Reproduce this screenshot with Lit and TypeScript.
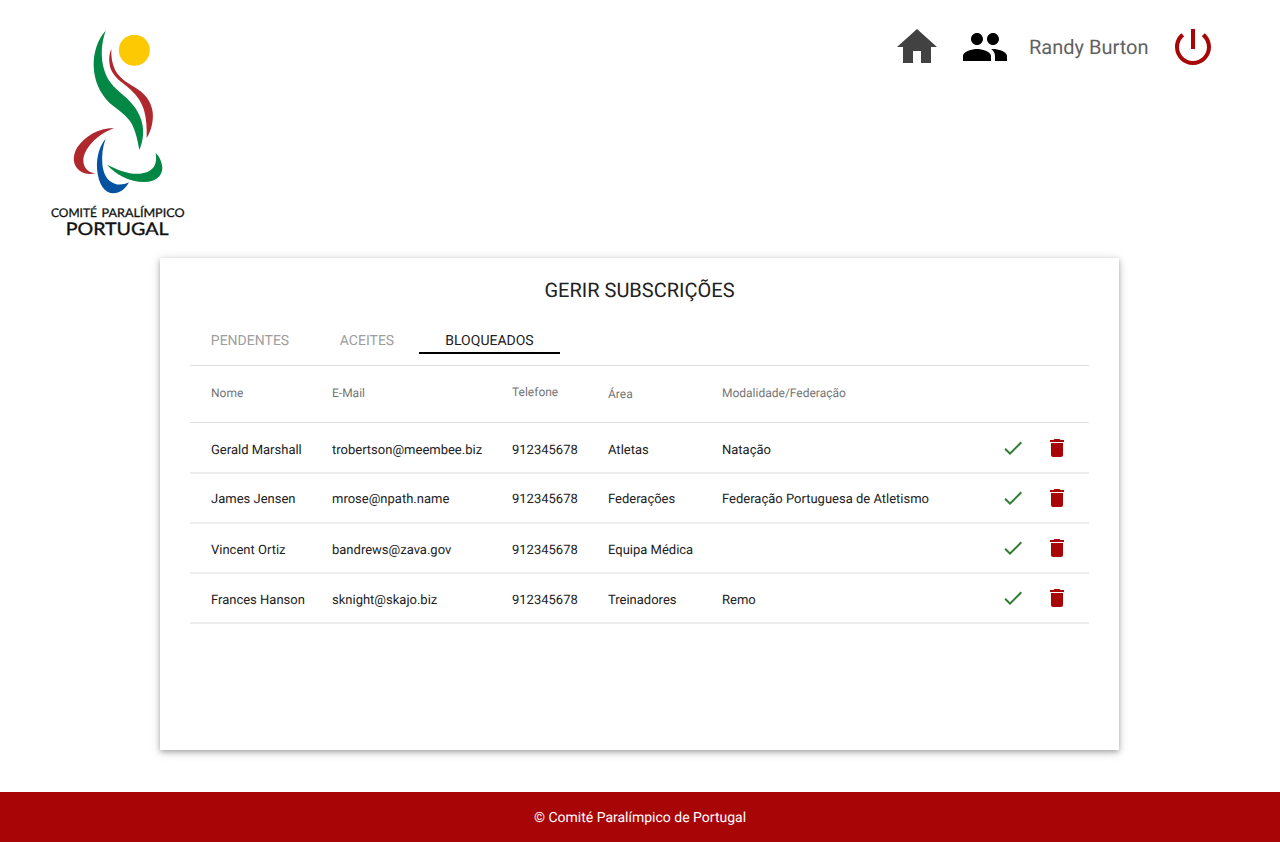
import { LitElement, html, css, svg } from "lit";
import { customElement } from "lit/decorators.js";

interface Row {
  nome: string;
  email: string;
  telefone: string;
  area: string;
  modalidade: string;
}

const rows: Row[] = [
  { nome: "Gerald Marshall", email: "trobertson@meembee.biz", telefone: "912345678", area: "Atletas", modalidade: "Natação" },
  { nome: "James Jensen", email: "mrose@npath.name", telefone: "912345678", area: "Federações", modalidade: "Federação Portuguesa de Atletismo" },
  { nome: "Vincent Ortiz", email: "bandrews@zava.gov", telefone: "912345678", area: "Equipa Médica", modalidade: "" },
  { nome: "Frances Hanson", email: "sknight@skajo.biz", telefone: "912345678", area: "Treinadores", modalidade: "Remo" },
];

const icon = (d: string, cls: string) =>
  html`<svg class="icon ${cls}" viewBox="0 0 24 24">${svg`<path d=${d}></path>`}</svg>`;

const HOME = "M10 20v-6h4v6h5v-8h3L12 3 2 12h3v8z";
const GROUP =
  "M16 11c1.66 0 2.99-1.34 2.99-3S17.66 5 16 5c-1.66 0-3 1.34-3 3s1.34 3 3 3zm-8 0c1.66 0 2.99-1.34 2.99-3S9.66 5 8 5C6.34 5 5 6.34 5 8s1.34 3 3 3zm0 2c-2.33 0-7 1.17-7 3.5V19h14v-2.5c0-2.33-4.67-3.5-7-3.5zm8 0c-.29 0-.62.02-.97.05 1.16.84 1.97 1.97 1.97 3.45V19h6v-2.5c0-2.33-4.67-3.5-7-3.5z";
const POWER =
  "M13 3h-2v10h2V3zm4.83 2.17l-1.42 1.42C17.99 7.86 19 9.81 19 12c0 3.87-3.13 7-7 7s-7-3.13-7-7c0-2.19 1.01-4.14 2.58-5.42L6.17 5.17C4.23 6.82 3 9.26 3 12c0 4.97 4.03 9 9 9s9-4.03 9-9c0-2.74-1.23-5.18-3.17-6.83z";
const CHECK = "M9 16.17L4.83 12l-1.42 1.41L9 19 21 7l-1.41-1.41z";
const TRASH = "M6 19c0 1.1.9 2 2 2h8c1.1 0 2-.9 2-2V7H6v12zM19 4h-3.5l-1-1h-5l-1 1H5v2h14V4z";

@customElement("cpp-logo")
export class CppLogo extends LitElement {
  static styles = css`
    :host { display: block; width: 160px; height: 225px; }
    .mark { display: block; width: 160px; height: 225px; }
    .name { font-family: Lato, sans-serif; fill: #111; stroke: #111; }
    .small { font-size: 12px; stroke-width: 0.3px; }
    .large { font-size: 17.4px; stroke-width: 0.35px; }
  `;

  render() {
    return html`
      <svg class="mark" viewBox="0 0 480 675">
        <circle cx="283" cy="91" r="46.5" fill="#fdc902"></circle>
        <path fill="#028744" d="M197 32C174 57 160 95 161 139C163 184 180 220 208 248C235 271 261 285 276 313C287 335 293 362 298 390C307 370 312 343 308 318C302 280 279 250 250 226C219 199 202 183 192 148C182 112 183 71 197 32Z"></path>
        <path fill="#ae282e" d="M214 87C206 104 206 127 212 146C222 171 242 184 262 200C286 220 304 242 312 270C319 296 321 323 320 354C334 332 341 303 338 276C333 240 311 218 283 201C258 186 237 172 225 149C216 130 213 109 214 87Z"></path>
        <path fill="#ae282e" d="M222 324C178 323 134 349 112 382C95 411 99 438 120 453C132 462 149 464 166 460C143 457 131 443 130 422C131 386 169 345 222 324Z"></path>
        <path fill="#0552a0" d="M197 356C179 377 169 409 171 446C175 493 194 520 221 520C242 519 257 505 267 487C252 494 237 496 224 491C200 482 190 461 187 432C185 405 188 379 197 356Z"></path>
        <path fill="#028744" d="M201 434C226 463 269 486 313 486C346 485 367 469 367 443C366 427 359 410 347 399C351 425 346 442 329 452C293 472 247 457 201 434Z"></path>
        <g transform="translate(33 592) scale(3.4 3)">
          <text class="name small" x="0" y="0" textLength="40.5" lengthAdjust="spacingAndGlyphs">COMITÉ</text>
          <text class="name small" x="44.6" y="0" textLength="73.2" lengthAdjust="spacingAndGlyphs">PARALÍMPICO</text>
        </g>
        <g transform="translate(77 645) scale(3.15 3)">
          <text class="name large" x="0" y="0" textLength="98" lengthAdjust="spacingAndGlyphs">PORTUGAL</text>
        </g>
      </svg>
    `;
  }
}

@customElement("app-root")
export class AppRoot extends LitElement {
  static styles = css`
    :host {
      display: flex;
      flex-direction: column;
      height: 842px;
      background: #fff;
      color: #212121;
      font-family: Roboto, sans-serif;
      text-rendering: geometricPrecision;
      box-sizing: border-box;
    }
    .icon { display: block; width: 24px; height: 24px; flex: none; }
    .top { display: flex; justify-content: space-between; height: 258px; box-sizing: border-box; padding: 20px 63px 0 40px; }
    .nav { display: flex; height: 48px; margin-top: 3px; align-items: center; }
    .big { width: 48px; height: 48px; }
    .home { fill: #424242; }
    .group { fill: #000; margin-left: 20px; }
    .user { font-size: 20px; line-height: 48px; color: #616161; margin: 0 21px 0 20px; width: 119px; white-space: nowrap; }
    .power, .trash { fill: #a80606; }
    .check { fill: #2e7d32; }
    .card {
      width: 959px;
      height: 492px;
      box-sizing: border-box;
      margin: 0 0 0 160px;
      padding: 16px 30px 0;
      background: #fff;
      box-shadow: 0 2px 5px rgba(0,0,0,.26), 0 2px 10px rgba(0,0,0,.16);
    }
    .title { margin: 0; font-size: 20px; font-weight: 400; line-height: 32px; text-align: center; }
    .tabs { display: flex; height: 60px; box-sizing: border-box; align-items: flex-end; padding-bottom: 11px; border-bottom: 1px solid #e0e0e0; }
    .tab { height: 28px; box-sizing: border-box; line-height: 30px; font-size: 14px; color: #9e9e9e; border-bottom: 2px solid transparent; text-align: center; white-space: nowrap; }
    .t0 { width: 120px; margin-right: 1px; }
    .t1 { width: 112px; margin-right: -4px; }
    .active { width: 141px; color: #212121; border-color: #000; }
    .row { display: grid; grid-template-columns: 121px 180px 96px 114px 279px 44px 24px; padding-left: 21px; height: 50px; box-sizing: border-box; border-bottom: 2px solid #eee; line-height: 20px; font-size: 13px; white-space: nowrap; align-items: start; }
    .first { height: 51px; padding-top: 1px; }
    .cell { padding-top: 17px; }
    .raised .cell { padding-top: 16px; }
    .row .icon { margin-top: 12px; }
    .head { height: 57px; font-size: 12px; color: #757575; border-bottom: 1px solid #e0e0e0; }
    .head .cell { padding-top: 17px; }
    .head .up { padding-top: 16px; }
    .head .down { padding-top: 18px; }
    .footer { margin-top: auto; height: 50px; background: #a80606; color: #fff; font-size: 14px; line-height: 52px; text-align: center; }
  `;

  render() {
    return html`
      <header class="top">
        <cpp-logo></cpp-logo>
        <nav class="nav">
          ${icon(HOME, "big home")} ${icon(GROUP, "big group")}
          <span class="user">Randy Burton</span>
          ${icon(POWER, "big power")}
        </nav>
      </header>
      <main class="card">
        <h1 class="title">GERIR SUBSCRIÇÕES</h1>
        <div class="tabs">
          <div class="tab t0">PENDENTES</div>
          <div class="tab t1">ACEITES</div>
          <div class="tab active">BLOQUEADOS</div>
        </div>
        <div class="row head">
          <div class="cell">Nome</div>
          <div class="cell">E-Mail</div>
          <div class="cell up">Telefone</div>
          <div class="cell down">Área</div>
          <div class="cell">Modalidade/Federação</div>
        </div>
        ${rows.map(
          (r, i) => html`<div class="row ${i === 0 ? "first" : i === 1 ? "raised" : ""}">
            <div class="cell">${r.nome}</div>
            <div class="cell">${r.email}</div>
            <div class="cell">${r.telefone}</div>
            <div class="cell">${r.area}</div>
            <div class="cell">${r.modalidade}</div>
            ${icon(CHECK, "check")} ${icon(TRASH, "trash")}
          </div>`
        )}
      </main>
      <footer class="footer">© Comité Paralímpico de Portugal</footer>
    `;
  }
}
